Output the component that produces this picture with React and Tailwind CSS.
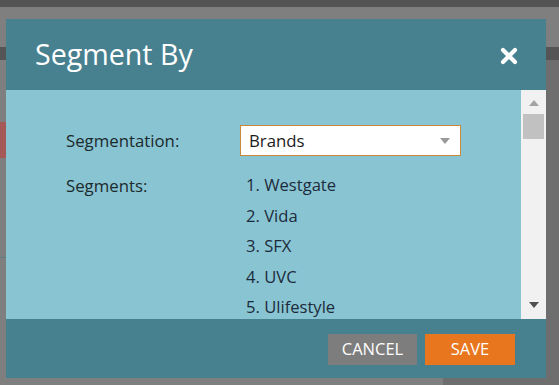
import React from 'react';

const segments = ['Westgate', 'Vida', 'SFX', 'UVC', 'Ulifestyle'];

const CloseIcon = () => (
    <svg width="18" height="18" viewBox="0 0 18 18">
        <path d="M3 3 L15 15 M15 3 L3 15" stroke="#ffffff" strokeWidth="4.2" strokeLinecap="round" />
    </svg>
);

export default function App() {
    return (
        <div className="relative w-[559px] h-[385px] overflow-hidden bg-[#7f7f7f]" style={{ fontFamily: '"Open Sans", sans-serif' }}>
            {/* page behind the dialog */}
            <div className="h-[7px] bg-[#545454]" />
            <div className="absolute left-0 top-[47px] w-full h-[13px] bg-[#555555]" />
            <div className="absolute left-0 top-[122px] w-[6px] h-[36px] bg-[#a55a57]" />
            <div className="absolute right-0 top-[60px] w-[13px] h-[325px] bg-[#6e6e6e]" />
            <div className="absolute left-0 top-[257px] w-[6px] h-px bg-[#5a7a85]" />
            <div className="absolute left-[443px] top-[378px] w-[116px] h-[7px] bg-[#6e6e6e]" />

            {/* dialog */}
            <div className="relative ml-[6px] mt-[12px] w-[540px] flex flex-col">
                <div className="h-[71px] bg-[#47808f] flex items-center justify-between pl-[29px] pr-[28px]">
                    <h1 className="text-[28.6px] text-white leading-none pb-[1px]">Segment By</h1>
                    <button className="mt-[3px]">
                        <CloseIcon />
                    </button>
                </div>

                <div className="h-[229px] bg-[#89c4d3] flex">
                    <div className="flex-1 overflow-hidden pl-[60px] pt-[35px]">
                        <div className="flex items-center">
                            <span className="w-[174px] text-[16.8px] text-[#1b2a2c]">Segmentation:</span>
                            <div className="w-[221px] h-[31px] bg-white border border-[#c8893a] flex items-center justify-between pl-[8px] pr-[10px]">
                                <span className="text-[16.8px] text-[#1c1c1c]">Brands</span>
                                <svg width="10" height="6" viewBox="0 0 10 6">
                                    <path d="M0 0 H10 L5 6 Z" fill="#9a9a9a" />
                                </svg>
                            </div>
                        </div>
                        <div className="flex mt-[14px]">
                            <span className="w-[174px] text-[16.8px] text-[#1b2a2c] leading-[31px]">Segments:</span>
                            <ol className="pl-[6px]">
                                {segments.map((s, i) => (
                                    <li key={s} className="text-[16.6px] text-[#1c2b3a] leading-[30.5px]">
                                        {i + 1}. {s}
                                    </li>
                                ))}
                            </ol>
                        </div>
                    </div>
                    <div className="w-[25px] bg-[#f1f1f1] flex flex-col items-center pt-[10px] pb-[11px]">
                        <svg width="10" height="6" viewBox="0 0 10 6">
                            <path d="M0 6 H10 L5 0 Z" fill="#a3a3a3" />
                        </svg>
                        <div className="w-[21px] h-[25px] bg-[#c1c1c1] mt-[8px]" />
                        <div className="flex-1" />
                        <svg width="10" height="6" viewBox="0 0 10 6">
                            <path d="M0 0 H10 L5 6 Z" fill="#505050" />
                        </svg>
                    </div>
                </div>

                <div className="h-[59px] bg-[#47808f] flex justify-end items-start pt-[15px] pr-[31px] gap-[8px]">
                    <button className="w-[89px] h-[31px] bg-[#7d7d7d] text-white text-[16.5px] flex items-center justify-center">CANCEL</button>
                    <button className="w-[90px] h-[31px] bg-[#e8761e] text-white text-[16.5px] flex items-center justify-center">SAVE</button>
                </div>
            </div>
        </div>
    );
}
